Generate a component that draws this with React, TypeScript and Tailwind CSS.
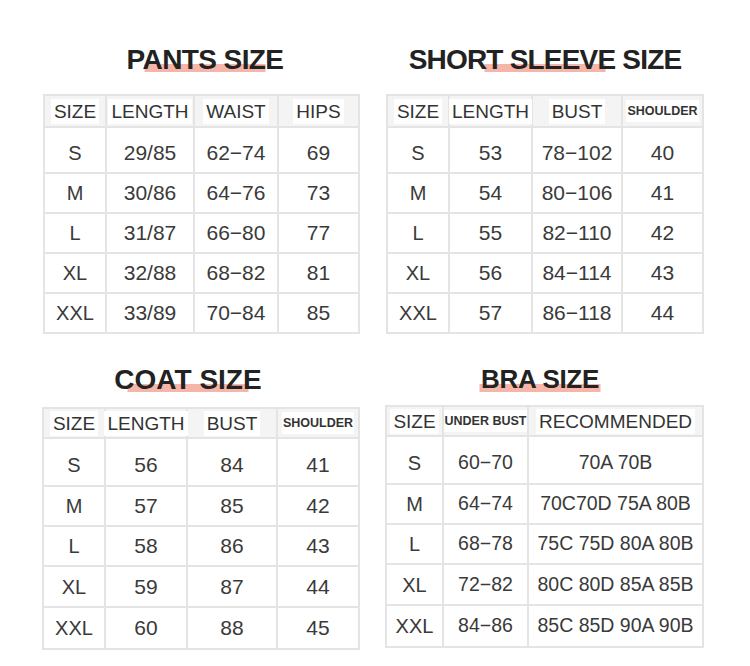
import React from 'react'

type Table = {
  title: string
  titleClass: string
  shiftClass: string
  cols: string
  rows: string
  tableClass: string
  bodyText: string
  head: { label: string; small?: boolean }[]
  body: string[][]
}

const tables: Table[] = [
  {
    title: 'PANTS SIZE',
    titleClass: 'text-[28px] tracking-[-0.6px]',
    shiftClass: 'pl-[8px]',
    cols: 'grid-cols-[60px_86px_82px_79px]',
    rows: 'grid-rows-[30px_44px_38px_38px_38px_38px]',
    tableClass: 'ml-[1px] w-[317px]',
    bodyText: 'text-[21px]',
    head: [{ label: 'SIZE' }, { label: 'LENGTH' }, { label: 'WAIST' }, { label: 'HIPS' }],
    body: [
      ['S', '29/85', '62−74', '69'],
      ['M', '30/86', '64−76', '73'],
      ['L', '31/87', '66−80', '77'],
      ['XL', '32/88', '68−82', '81'],
      ['XXL', '33/89', '70−84', '85'],
    ],
  },
  {
    title: 'SHORT SLEEVE SIZE',
    titleClass: 'text-[28px] tracking-[-0.8px]',
    shiftClass: 'pl-[1px]',
    cols: 'grid-cols-[60px_81px_88px_79px]',
    rows: 'grid-rows-[30px_44px_38px_38px_38px_38px]',
    tableClass: 'ml-[1px] w-[318px]',
    bodyText: 'text-[21px]',
    head: [{ label: 'SIZE' }, { label: 'LENGTH' }, { label: 'BUST' }, { label: 'SHOULDER', small: true }],
    body: [
      ['S', '53', '78−102', '40'],
      ['M', '54', '80−106', '41'],
      ['L', '55', '82−110', '42'],
      ['XL', '56', '84−114', '43'],
      ['XXL', '57', '86−118', '44'],
    ],
  },
  {
    title: 'COAT SIZE',
    titleClass: 'text-[28px] tracking-[0px]',
    shiftClass: 'pr-[26px]',
    cols: 'grid-cols-[60px_80px_88px_80px]',
    rows: 'grid-rows-[28px_46px_38px_38px_39px_40px]',
    tableClass: 'w-[318px]',
    bodyText: 'text-[21px]',
    head: [{ label: 'SIZE' }, { label: 'LENGTH' }, { label: 'BUST' }, { label: 'SHOULDER', small: true }],
    body: [
      ['S', '56', '84', '41'],
      ['M', '57', '85', '42'],
      ['L', '58', '86', '43'],
      ['XL', '59', '87', '44'],
      ['XXL', '60', '88', '45'],
    ],
  },
  {
    title: 'BRA SIZE',
    titleClass: 'text-[26px] tracking-[-0.3px]',
    shiftClass: 'pr-[9px]',
    cols: 'grid-cols-[55px_83px_173px]',
    rows: 'grid-rows-[28px_46px_38px_38px_39px_40px]',
    tableClass: 'w-[319px]',
    bodyText: 'text-[19.5px]',
    head: [{ label: 'SIZE' }, { label: 'UNDER BUST', small: true }, { label: 'RECOMMENDED' }],
    body: [
      ['S', '60−70', '70A 70B'],
      ['M', '64−74', '70C70D 75A 80B'],
      ['L', '68−78', '75C 75D 80A 80B'],
      ['XL', '72−82', '80C 80D 85A 85B'],
      ['XXL', '84−86', '85C 85D 90A 90B'],
    ],
  },
]

function SizeTable({ t, top, gap }: { t: Table; top: string; gap: string }) {
  return (
    <div className={top}>
      <div className={`flex justify-center ${t.shiftClass} ${gap}`}>
        <h2 className={`relative font-bold leading-none text-[#222] ${t.titleClass}`}>
          <span className="absolute left-1/2 top-[18px] h-[8px] w-[121px] -translate-x-1/2 bg-[#f5b6a9]" />
          <span className="relative">{t.title}</span>
        </h2>
      </div>
      <div className={`grid gap-[2px] bg-[#e4e4e4] p-[2px] ${t.cols} ${t.rows} ${t.tableClass}`}>
        {t.head.map(h => (
          <div key={h.label} className="flex items-center justify-center overflow-visible whitespace-nowrap bg-[#f4f4f4]">
            <span
              className={`bg-white leading-none text-[#333] ${
                h.small ? 'px-[1px] py-[5px] text-[12.5px] font-bold text-[#3a3a3a]' : 'px-[3px] py-[3px] text-[19px]'
              }`}
            >
              {h.label}
            </span>
          </div>
        ))}
        {t.body.map((row, r) =>
          row.map((cell, c) => (
            <div
              key={`${r}-${c}`}
              className={`flex items-center justify-center whitespace-nowrap bg-white text-[#3a3a3a] ${r === 0 ? 'pt-[6px]' : ''} ${
                c === 0 ? 'text-[20px]' : t.bodyText
              }`}
            >
              {cell}
            </div>
          ))
        )}
      </div>
    </div>
  )
}

export default function App() {
  return (
    <div className="h-[666px] w-[750px] overflow-hidden bg-white font-['Liberation_Sans',Arial,sans-serif]">
      <div className="grid grid-cols-[318px_319px] gap-x-[25px] pl-[42px]">
        <SizeTable t={tables[0]} top="pt-[46px]" gap="mb-[20px]" />
        <SizeTable t={tables[1]} top="pt-[46px]" gap="mb-[20px]" />
        <SizeTable t={tables[2]} top="pt-[32px]" gap="mb-[13px]" />
        <SizeTable t={tables[3]} top="pt-[32px]" gap="mb-[13px]" />
      </div>
    </div>
  )
}
